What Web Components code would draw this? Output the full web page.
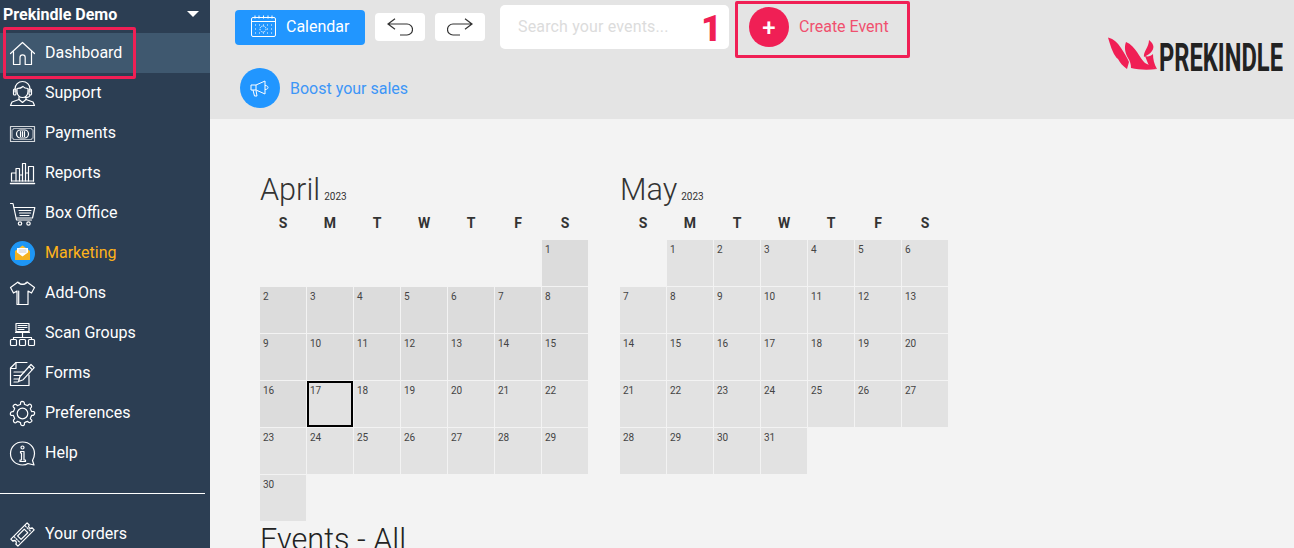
<!DOCTYPE html>
<html lang="en"><head><meta charset="utf-8"><title>Prekindle Dashboard</title>
<style>
html,body{margin:0;padding:0;height:548px;overflow:hidden;background:#f3f3f3;font-family:Roboto,"Liberation Sans",sans-serif}
</style></head><body>
<pk-app></pk-app>
<script>
function gearPath(){
 const c=12.5,R=12.2,r=9.4,n=8;let d='';
 const p=(rad,a)=>`${(c+rad*Math.cos(a)).toFixed(2)} ${(c+rad*Math.sin(a)).toFixed(2)}`;
 for(let i=0;i<n;i++){
  const a=i*2*Math.PI/n-Math.PI/2, s=.2, t=.13, next=a+2*Math.PI/n;
  d+=(i?'L':'M')+p(r,a-s)+'Q'+p(R,a-s)+' '+p(R,a-t*.4)+'Q'+p(R,a+s)+' '+p(r,a+s);
  d+='Q'+p(r-.4,(a+next)/2)+' '+p(r,next-s);
 }
 return d+'z';
}
const ICONS={
home:`<path d="M.5 12.500 12.500 1.500l12 11"/><path d="M3.500 10.500v13h6.500v-7a2.600 2.600 0 0 1 5.200 0v7h6.300v-13"/>`,
support:`<path d="M5 11V8a7.500 7.500 0 0 1 15 0v3"/><rect x="3.500" y="8" width="2.500" height="6" rx="1"/><rect x="19" y="8" width="2.500" height="6" rx="1"/><path d="M7 7.500c2.500 0 4.500-.5 6-2 1 1.300 3 2 5 2v3c0 3.500-2.500 6-5.500 6S7 14 7 10.500z"/><path d="M20 14c0 2-2 2.500-5 2.500"/><path d="M9 16v2.500l-7 2.500-1.500 3.500h24L23 21l-7-2.500V16"/><path d="M9 18.500l3.500 3 3.500-3"/>`,
payments:`<path d="M.5 5.500h24v15H.5z" stroke-opacity=".8"/><path d="M3.500 7.500h18c0 1 .5 1.500 1.500 1.500v8c-1 0-1.500.5-1.500 1.500h-18c0-1-.5-1.500-1.500-1.500V9c1 0 1.500-.5 1.500-1.500z" stroke-opacity=".6"/><rect x="6.500" y="9" width="12" height="8" rx="4"/><path d="M10.500 10.500v5M12.500 10.500v5M14.500 10.500v5"/>`,
reports:`<path d="M.5 22.500h24" stroke-width="1.500"/><path d="M1.500 20v-8h4.500v8M6 20V7.500h3.500V20M9.500 20V14h3V20M12.500 20V2.500h3V20M15.500 20v-8h3v8M18.500 20V5.500h5V20"/><path d="M1.500 20h22"/>`,
cart:`<path d="M.5 2.500h2.500l3.500 16.500h15"/><path d="M4 6.500h20.800L22.500 17H6.500"/><path d="M9 9.500h12M9.500 12h11M10 14.500h9"/><circle cx="10" cy="22.500" r="1.700"/><circle cx="18.500" cy="22.500" r="1.700"/>`,
marketing:`<circle cx="12.500" cy="12.500" r="12.500" fill="#1e96f5" stroke="none"/><path d="M5 10l7.500-5.500L20 10v9H5z" fill="#fbc02d" stroke="none"/><path d="M7 7h11v6l-5.500 3L7 13z" fill="#fff" stroke="none"/><path d="M5 10l7.500 5.500L20 10v9H5z" fill="#f5b21f" stroke="none"/><path d="M9 9h7M9 11h7" stroke="#bbb" stroke-width=".8"/>`,
shirt:`<path d="M8 1 .5 6.500 3.500 12l3.500-2v13.500h11V10l3.500 2 3-5.500L17 1c-.5 3-8.500 3-9 0z"/><path d="M9 1.500c.5 2.500 6.500 2.500 7 0"/><path d="M8.700 10v13.500"/>`,
scan:`<rect x="6" y="2.500" width="13" height="8"/><path d="M8 4.500h9M8 6.500h9M8 8.500h6"/><path d="M5.500 11.500h14M12.500 11.500v5M3.500 18v-1.500h18V18"/><rect x=".5" y="18.500" width="6" height="6" rx="1"/><rect x="9.500" y="18.500" width="6" height="6" rx="1"/><rect x="18.500" y="18.500" width="6" height="6" rx="1"/>`,
forms:`<path d="M19 14v10.500H.5V7L6 1.500h11"/><path d="M.5 7.500H6v-6"/><path d="M4 11h10M4 14.500h7M4 18h5M4 21h4"/><path d="M8.500 20.500l1.500-5L21 3.500l3.200 3.200-11 12z"/><path d="M19 5.500l3.200 3.200"/>`,
gear:`<circle cx="12.500" cy="12.500" r="5.300"/><path d="${gearPath()}"/>`,
help:`<path d="M12.500 1C5.500 1 .5 6 .5 12.500s5 11.500 12 11.500c2.500 0 4-.5 5.500-1.500l6 1.500-1.500-4.500c1-2 2-4 2-7C24.500 6 19.500 1 12.500 1z"/><circle cx="12.500" cy="6.500" r="1.500"/><path d="M10.500 10.500h3.500v8.500h1.500v1.500h-5.500V19h1.500V12h-1z"/>`,
ticket:`<g transform="rotate(-45 12.500 12.500)"><path d="M1 7.500H24v3a2 2 0 0 0 0 4v3H1v-3a2 2 0 0 0 0-4z"/><rect x="8" y="10" width="9.500" height="5"/><path d="M5 8v9M20.500 8v9" stroke-dasharray="1.500 1.500"/></g>`
};
class PkIcon extends HTMLElement{
 constructor(){super();this.attachShadow({mode:'open'}).innerHTML=`<style>:host{display:block;width:25px;height:25px;flex:none}svg{display:block;overflow:visible;fill:none;stroke:currentColor;stroke-width:1.200;stroke-linejoin:round;stroke-linecap:round}</style><svg width="25" height="25" viewBox="0 0 25 25">${ICONS[this.getAttribute('name')]||''}</svg>`;}
}
customElements.define('pk-icon',PkIcon);

class PkNavItem extends HTMLElement{
 constructor(){super();this.attachShadow({mode:'open'}).innerHTML=`<style>
 :host{display:flex;align-items:flex-start;height:40px;padding-left:10px;gap:10px;color:#fff;font-size:16px;box-sizing:border-box}
 :host([active]){background:#3f586f}
 :host([accent]){color:#ffb31a}
 pk-icon{color:#fff;margin-top:8px}
 span{line-height:39px}
 </style><pk-icon name="${this.getAttribute('icon')}"></pk-icon><span><slot></slot></span>`;}
}
customElements.define('pk-nav-item',PkNavItem);

class PkSidebar extends HTMLElement{
 constructor(){super();this.attachShadow({mode:'open'}).innerHTML=`<style>
 :host{display:block;width:210px;height:548px;background:#2c3e53;flex:none;overflow:hidden;color:#fff}
 .brand{display:flex;align-items:center;justify-content:space-between;height:33px;box-sizing:border-box;padding:0 11px 5px 3px;font-size:16px;font-weight:700}
 .caret{width:0;height:0;border:6px solid transparent;border-top:6px solid #fff;border-bottom:0;margin-bottom:1px}
 hr{border:0;border-top:1px solid #fff;margin:20px 5px 20px 0;height:0}
 </style>
 <div class="brand"><span>Prekindle Demo</span><i class="caret"></i></div>
 <nav>
 <pk-nav-item icon="home" active>Dashboard</pk-nav-item>
 <pk-nav-item icon="support">Support</pk-nav-item>
 <pk-nav-item icon="payments">Payments</pk-nav-item>
 <pk-nav-item icon="reports">Reports</pk-nav-item>
 <pk-nav-item icon="cart">Box Office</pk-nav-item>
 <pk-nav-item icon="marketing" accent>Marketing</pk-nav-item>
 <pk-nav-item icon="shirt">Add-Ons</pk-nav-item>
 <pk-nav-item icon="scan">Scan Groups</pk-nav-item>
 <pk-nav-item icon="forms">Forms</pk-nav-item>
 <pk-nav-item icon="gear">Preferences</pk-nav-item>
 <pk-nav-item icon="help">Help</pk-nav-item>
 </nav><hr>
 <pk-nav-item icon="ticket">Your orders</pk-nav-item>`;}
}
customElements.define('pk-sidebar',PkSidebar);

class PkLogo extends HTMLElement{
 constructor(){super();this.attachShadow({mode:'open'}).innerHTML=`<style>:host{display:block;width:176px;height:54px}svg{display:block}
 text{font-family:Roboto,sans-serif;font-weight:700;font-size:39px;fill:#222}</style>
 <svg width="176" height="54" viewBox="0 -8 176 54">
 <g fill="#f01f55"><path d="M1 .5C7 2 11 6 14 11c3 5 6 9 8 14l-2 7c-4-3-7-6-9-10C7 19 4 11 1 .5z"/><path d="M19 5c5 2 8 6 11 10 3 5 6 9 8 11l12 6c-8 1-18 1-26-1 0-4-1-7-3-10-3-5-4-11-2-16z"/><path d="M42 3c4 3 6 7 3 11-2 3-5 4-8 6-1-5 5-10 5-17z"/><path d="M38 19c3 1 6 0 8-2 0 5 1 10 4 15l-8-3z"/></g>
 <text x="52" y="33.500" textLength="124" lengthAdjust="spacingAndGlyphs">PREKINDLE</text></svg>`;}
}
customElements.define('pk-logo',PkLogo);

class PkHeader extends HTMLElement{
 constructor(){super();this.attachShadow({mode:'open'}).innerHTML=`<style>
 :host{display:flex;justify-content:space-between;height:119px;background:#e4e4e4;box-sizing:border-box;padding-left:25px;padding-right:11px;flex:none}
 .row{display:flex;align-items:center;height:54px}
 .cal{display:flex;align-items:center;width:130px;height:35px;background:#2196ff;border-radius:4px;color:#fff;font-size:16px;gap:10px;box-sizing:border-box;padding-left:16px}
 .cal svg{display:block}
 .cal span,.create span{padding-bottom:2px}
 .hist{display:flex;align-items:center;justify-content:center;width:50px;height:28px;background:#fff;border-radius:4px;margin-left:10px}
 .search{width:229px;height:44px;background:#fff;border-radius:5px;margin-left:15px;box-sizing:border-box;padding:0 0 2px 18px;display:flex;align-items:center;color:#dcdcdc;font-size:16px;letter-spacing:.15px}
 .create{display:flex;align-items:center;margin-left:20px;gap:10px;color:#f0506f;font-size:16px}
 .circ{width:40px;height:40px;border-radius:50%;display:flex;align-items:center;justify-content:center;flex:none;box-sizing:border-box}
 .red{background:#f01f55;color:#fff;font-size:24px;font-weight:500;padding-top:2px}
 .blue{background:#2196ff}
 .boost{display:flex;align-items:center;gap:10px;margin:14px 0 0 5px;color:#3d96f7;font-size:16px}
 pk-logo{margin-top:29px}
 </style>
 <div>
  <div class="row">
   <div class="cal"><svg width="25" height="24" viewBox="0 0 25 24" fill="none" stroke="#fff" stroke-width="1"><rect x=".5" y="2.500" width="24" height="19" rx="1.500"/><path d="M.5 6.500h24M4 .5v3M8 .5v3M12.500.5v3M17 .5v3M21 .5v3"/><circle cx="12" cy="14" r="3" stroke-dasharray="1.200 .8"/><path d="M4 10h1M8 10h1M16 10h1M20 10h1M4 14h1M20 14h1M16 14h1M4 18h1M8 18h1M12 18h1M16 18h1M20 18h1M12 10h1"/></svg><span>Calendar</span></div>
   <div class="hist"><svg width="26" height="18" viewBox="0 0 26 18" fill="none" stroke="#333" stroke-width="1.200"><path d="M8 .8 1 6l7 5.200M1 6h19a5 5 0 0 1 0 11h-7"/></svg></div>
   <div class="hist"><svg width="26" height="18" viewBox="0 0 26 18" fill="none" stroke="#333" stroke-width="1.200"><path d="M18 .8 25 6l-7 5.200M25 6H6a5 5 0 0 0 0 11h7"/></svg></div>
   <div class="search">Search your events...</div>
   <div class="create"><div class="circ red">+</div><span>Create Event</span></div>
  </div>
  <div class="boost"><div class="circ blue"><svg width="20" height="20" viewBox="0 0 20 20" fill="none" stroke="#fff" stroke-width="1"><path d="M1 7h5l9-4v13l-9-4H1z"/><path d="M6 7v5M15 7.500c2 0 3 1 3 2s-1 2-3 2M3 12l1.500 6h2.500L6 12.500"/></svg></div><span>Boost your sales</span></div>
 </div>
 <pk-logo></pk-logo>`;}
}
customElements.define('pk-header',PkHeader);

class PkCalendar extends HTMLElement{
 constructor(){super();
  const start=+this.getAttribute('start'),days=+this.getAttribute('days'),today=+this.getAttribute('today')||0;
  let cells='';
  for(let i=0;i<start;i++)cells+='<div class="blank"></div>';
  for(let d=1;d<=days;d++){cells+=`<div class="day${d<today?' past':''}${d===today?' today':''}">${d}</div>`;}
  this.attachShadow({mode:'open'}).innerHTML=`<style>
 :host{display:block;width:328px;color:#333}
 .title{height:41px;line-height:41px;font-size:30.600px;font-weight:300;white-space:nowrap}
 .title small{font-size:10px;font-weight:400;margin-left:4px}
 .grid{display:grid;grid-template-columns:repeat(7,46px);gap:1px}
 .dow{height:26px;line-height:26px;margin-bottom:4px;font-size:14px;font-weight:700;text-align:center}
 .dow .grid{height:26px}
 .cells{grid-auto-rows:46px}
 .day{background:#e2e2e2;font-size:10px;line-height:14px;padding:3px 3px;box-sizing:border-box;color:#444}
 .past{background:#dcdcdc}
 .today{box-shadow:inset 0 0 0 2px #000}
 </style>
 <div class="title">${this.getAttribute('month')}<small>2023</small></div>
 <div class="dow"><div class="grid">${['S','M','T','W','T','F','S'].map(x=>`<span>${x}</span>`).join('')}</div></div>
 <div class="grid cells">${cells}</div>`;}
}
customElements.define('pk-calendar',PkCalendar);

class PkApp extends HTMLElement{
 constructor(){super();this.attachShadow({mode:'open'}).innerHTML=`<style>
 :host{display:flex;position:relative;width:1294px;height:548px;overflow:hidden;background:#f3f3f3}
 main{flex:1;display:flex;flex-direction:column;min-width:0}
 .content{padding:50px 0 0 50px}
 .months{display:flex;gap:32px}
 h2{margin:0;font-size:30.600px;font-weight:300;line-height:38px;color:#222;white-space:nowrap}
 .mark{position:absolute;border:3px solid #f01f55;border-radius:2px;box-sizing:border-box}
 .one{position:absolute;left:701px;top:8px;font-size:36px;line-height:42px;font-weight:900;color:#f01f55}
 </style>
 <pk-sidebar></pk-sidebar>
 <main><pk-header></pk-header>
 <div class="content"><div class="months">
  <pk-calendar month="April" start="6" days="30" today="17"></pk-calendar>
  <pk-calendar month="May" start="1" days="31"></pk-calendar>
 </div><h2>Events - All</h2></div></main>
 <div class="mark" style="left:3px;top:27px;width:133px;height:52px"></div>
 <div class="mark" style="left:735px;top:1px;width:175px;height:57px"></div>
 <div class="one">1</div>`;}
}
customElements.define('pk-app',PkApp);
</script></body></html>
